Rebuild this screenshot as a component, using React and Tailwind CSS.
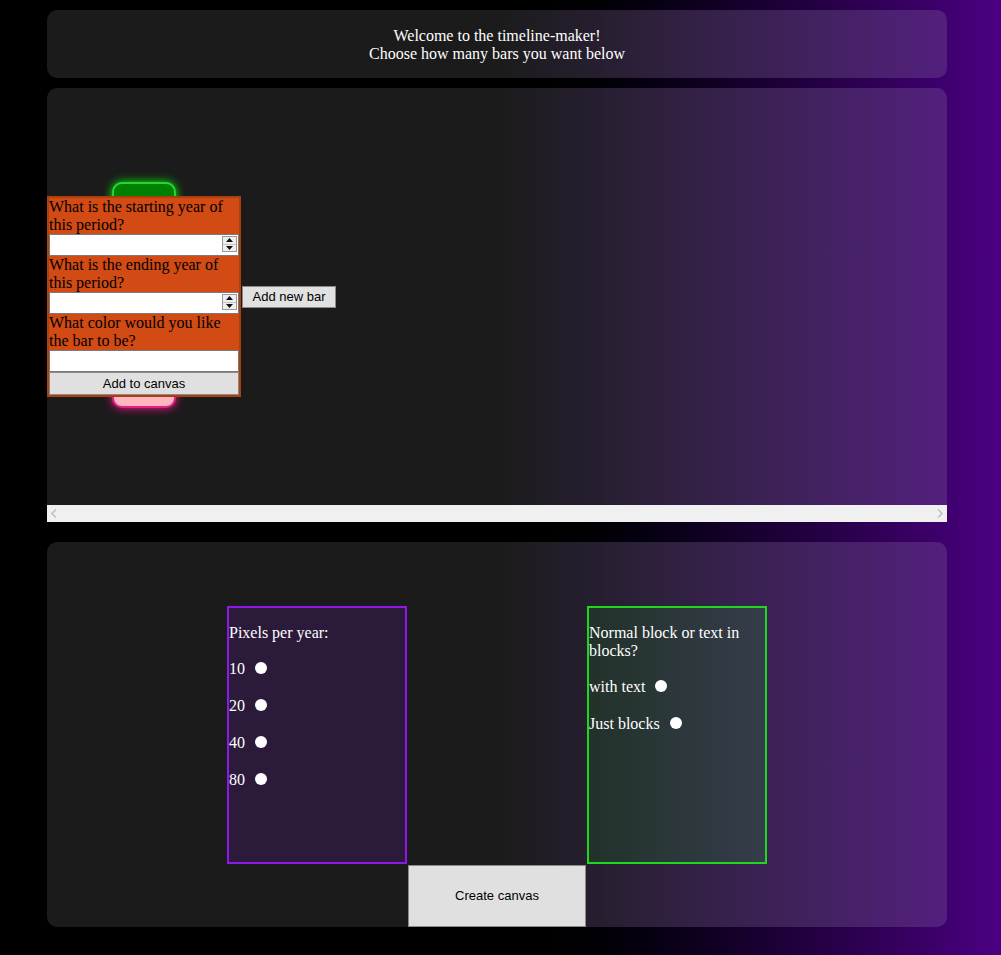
import React from 'react';

const panelBg = 'bg-linear-to-r from-[#1b1b1b] via-[#1b1b1b] to-[#531f7e]';

// small fake spinner for the year fields
const Spinner = () => (
  <div className="absolute right-[2px] top-[2px] w-[15px] h-[16px] border border-[#9a9a9a] bg-[#efefef] flex flex-col">
    <div className="flex-1 flex items-center justify-center border-b border-[#c4c4c4]">
      <svg width="7" height="4" viewBox="0 0 7 4">
        <path d="M0 4 L3.5 0 L7 4 Z" fill="#111" />
      </svg>
    </div>
    <div className="flex-1 flex items-center justify-center">
      <svg width="7" height="4" viewBox="0 0 7 4">
        <path d="M0 0 L3.5 4 L7 0 Z" fill="#111" />
      </svg>
    </div>
  </div>
);

const YearField = () => (
  <div className="relative h-[22px]">
    <input type="text" readOnly className="w-full h-full bg-white border border-[#7a7a7a] outline-none" />
    <Spinner />
  </div>
);

const Radio = ({ name }) => (
  <input
    type="radio"
    name={name}
    className="appearance-none w-[12px] h-[12px] rounded-full bg-white ml-[10px] mt-[-2px]"
  />
);

const App = () => {
  return (
    <div className="min-h-screen bg-linear-to-r from-black via-black to-[#4b0082] pt-[10px] pb-[28px] font-['Liberation_Serif',serif] text-base text-white">
      <div className="ml-[47px] w-[900px]">
        {/* Header */}
        <div className={`${panelBg} rounded-[10px] h-[68px] pt-[2px] flex flex-col items-center justify-center leading-[18px]`}>
          <p>Welcome to the timeline-maker!</p>
          <p>Choose how many bars you want below</p>
        </div>

        {/* Timeline area */}
        <div className={`${panelBg} mt-[10px] rounded-t-[10px] overflow-hidden`}>
          <div className="relative h-[417px] flex items-center">
            {/* bars already on the canvas */}
            <div className="absolute left-[65px] top-[94px] w-[64px] h-[40px] rounded-[10px] bg-[#008000] border-2 border-[#2bd436] shadow-[0_0_10px_#00ff00]" />
            <div className="absolute left-[65px] top-[282px] w-[64px] h-[38px] rounded-[10px] bg-[#ffb6c1] border-2 border-[#e2207e] shadow-[0_0_10px_#ff1493]" />

            {/* new bar form */}
            <div className="relative z-10 w-[194px] bg-[#d24a14] border-2 border-[#a8400f] text-black leading-[18px]">
              <div className="h-[36px]">What is the starting year of this period?</div>
              <YearField />
              <div className="h-[36px]">What is the ending year of this period?</div>
              <YearField />
              <div className="h-[36px]">What color would you like the bar to be?</div>
              <input type="text" readOnly className="block w-full h-[22px] bg-white border border-[#7a7a7a] outline-none" />
              <button className="block w-full h-[23px] bg-[#e0e0e0] border border-[#8a8a8a] font-['Liberation_Sans',sans-serif] text-[13px] leading-none">
                Add to canvas
              </button>
            </div>
            <button className="relative z-10 ml-[1px] w-[94px] h-[22px] bg-[#e1e1e1] border border-[#8a8a8a] text-black font-['Liberation_Sans',sans-serif] text-[13px] leading-none">
              Add new bar
            </button>
          </div>

          {/* horizontal scrollbar */}
          <div className="h-[17px] bg-[#f0f0f0] flex items-center justify-between px-[4px]">
            <svg width="6" height="9" viewBox="0 0 6 9">
              <path d="M5 0.5 L1 4.5 L5 8.5" fill="none" stroke="#c2c2c2" strokeWidth="1.6" />
            </svg>
            <svg width="6" height="9" viewBox="0 0 6 9">
              <path d="M1 0.5 L5 4.5 L1 8.5" fill="none" stroke="#c2c2c2" strokeWidth="1.6" />
            </svg>
          </div>
        </div>

        {/* Settings */}
        <div className={`${panelBg} mt-[20px] rounded-[10px] pt-[64px] grid grid-cols-[180px_178px_180px] grid-rows-[258px_62px] gap-[1px] justify-center`}>
          <div className="col-start-1 row-start-1 border-2 border-[#8f17e8] bg-[#2c1a3b] leading-[18px]">
            <p className="mt-4">Pixels per year:</p>
            {['10', '20', '40', '80'].map((v) => (
              <p key={v} className="mt-4 h-[21px] flex items-center">
                {v}
                <Radio name="ppy" />
              </p>
            ))}
          </div>

          <div className="col-start-3 row-start-1 border-2 border-[#1ed81e] bg-linear-to-r from-[#22322a] to-[#353c4b] leading-[18px]">
            <p className="mt-4">Normal block or text in blocks?</p>
            <p className="mt-4 h-[21px] flex items-center">
              with text
              <Radio name="mode" />
            </p>
            <p className="mt-4 h-[21px] flex items-center">
              Just blocks
              <Radio name="mode" />
            </p>
          </div>

          <button className="col-start-2 row-start-2 bg-[#e0e0e0] border border-[#8a8a8a] text-black font-['Liberation_Sans',sans-serif] text-[13px]">
            Create canvas
          </button>
        </div>
      </div>
    </div>
  );
};

export default App;
